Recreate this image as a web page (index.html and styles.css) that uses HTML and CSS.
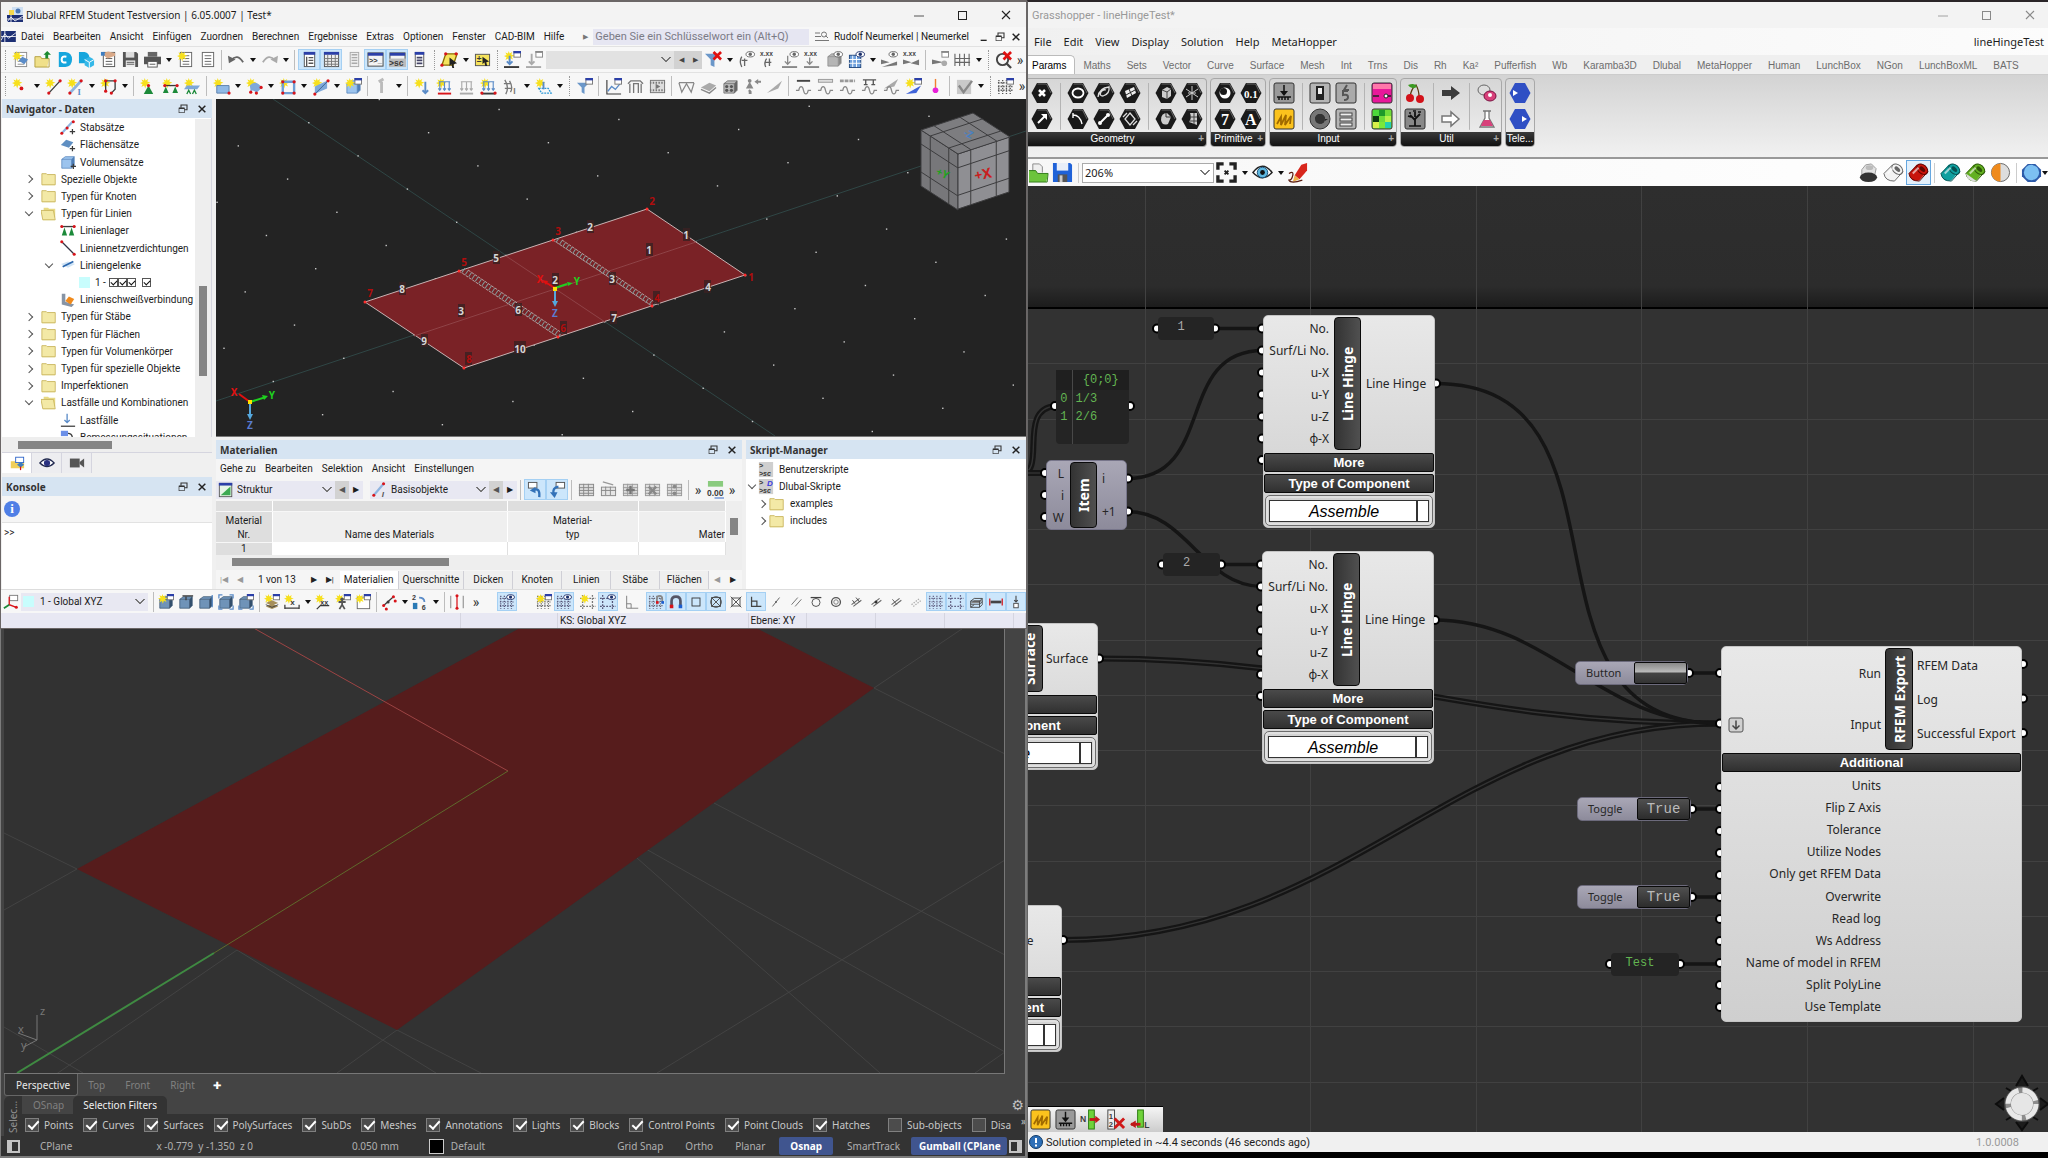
FILE: index.html
```html
<!DOCTYPE html>
<html lang="de">
<head>
<meta charset="utf-8">
<title>RFEM, Rhino und Grasshopper</title>
<link rel="stylesheet" href="styles.css">
</head>
<body>
<div class="desktop">
  <div class="left">
    <section class="rfem">
      <header class="titlebar">
        <svg class="applogo" viewBox="0 0 16 16"><rect x="5" width="11" height="8" fill="#cfe0f2"/><rect x="2" y="3" width="5" height="5" fill="#f5d94c"/><circle cx="11" cy="4" r="2.500" fill="#4a78b5"/><rect y="8" width="16" height="7" fill="#1d2f74"/><path d="M0 12h16M4 8v7M0 15l4-5 4 4 8-5" stroke="#fff" stroke-width=".8" fill="none"/></svg>
        <h1>Dlubal RFEM Student Testversion | 6.05.0007 | Test*</h1>
        <div class="winbtns"><button aria-label="Minimieren" data-icon="min"></button><button aria-label="Maximieren" data-icon="max"></button><button aria-label="Schließen" data-icon="close"></button></div>
      </header>
      <nav class="menubar">
        <svg class="doclogo" viewBox="0 0 16 12"><rect width="16" height="12" fill="#1d2f74"/><path d="M0 6h16M4 0v12M0 10l4-7 4 5 8-6" stroke="#fff" stroke-width=".9" fill="none"/></svg>
        <button>Datei</button><button>Bearbeiten</button><button>Ansicht</button><button>Einfügen</button><button>Zuordnen</button><button>Berechnen</button><button>Ergebnisse</button><button>Extras</button><button>Optionen</button><button>Fenster</button><button>CAD-BIM</button><button>Hilfe</button>
        <span class="play">▶</span>
        <input class="search" type="text" aria-label="Schlüsselwort" placeholder="Geben Sie ein Schlüsselwort ein (Alt+Q)">
        <svg class="find" viewBox="0 0 14 11"><path d="M0 2h5M0 5.500h6M0 9.500h14M13 7l-2.500-2.500" stroke="#777" fill="none"/><circle cx="9" cy="3.500" r="2.500" stroke="#777" fill="none"/></svg>
        <span class="user">Rudolf Neumerkel | Neumerkel</span>
        <div class="docbtns"><button aria-label="Minimieren" data-icon="dmin"></button><button aria-label="Wiederherstellen" data-icon="restore"></button><button aria-label="Schließen" data-icon="dclose"></button></div>
      </nav>
      <div class="tools" data-tools=": new open center cubes props save print v newdoc doc | undo v redo v | *panel *gridp report *console *script list : select v calc : loadnew loadgray =combo prev next filterx v eyeA xxA eyeB xxB boxeye gridblue v eyeC xxC | winramp rail v : zoomx more"></div>
      <div class="tools row2" data-tools=": node v line member v frame v | support hinge surfsup | surface v shell v opening v solid v block | gmember v | loadA loadB loadC loadD loadE v loadF v : filterw | chart arch film | curve slab dice persons ramp | waveA waveB waveC waveD waveE rampnew pin | check v : dotgrid more"></div>

      <div class="work">
        <aside class="sidebar">
          <section class="dock">
            <header class="dockhead"><h2>Navigator - Daten</h2><button aria-label="Lösen" data-icon="restore"></button><button aria-label="Schließen" data-icon="dclose"></button></header>
            <div class="treebox">
              <ul class="tree">
                <li class="l2"><i data-icon="stab"></i>Stabsätze</li>
                <li class="l2"><i data-icon="flaeche"></i>Flächensätze</li>
                <li class="l2"><i data-icon="volumen"></i>Volumensätze</li>
                <li class="l1 shut"><i data-icon="folder"></i>Spezielle Objekte</li>
                <li class="l1 shut"><i data-icon="folder"></i>Typen für Knoten</li>
                <li class="l1 expanded"><i data-icon="folderopen"></i>Typen für Linien</li>
                <li class="l2"><i data-icon="lager"></i>Linienlager</li>
                <li class="l2"><i data-icon="netz"></i>Liniennetzverdichtungen</li>
                <li class="l2 expanded"><i data-icon="gelenk"></i>Liniengelenke</li>
                <li class="l3"><span class="cyan"></span>1 - <input type="checkbox" checked aria-label="ux"><input type="checkbox" checked aria-label="uy"><input type="checkbox" checked aria-label="uz"><input class="apart" type="checkbox" checked aria-label="phi x"></li>
                <li class="l2"><i data-icon="weld"></i>Linienschweißverbindung</li>
                <li class="l1 shut"><i data-icon="folder"></i>Typen für Stäbe</li>
                <li class="l1 shut"><i data-icon="folder"></i>Typen für Flächen</li>
                <li class="l1 shut"><i data-icon="folder"></i>Typen für Volumenkörper</li>
                <li class="l1 shut"><i data-icon="folder"></i>Typen für spezielle Objekte</li>
                <li class="l1 shut"><i data-icon="folder"></i>Imperfektionen</li>
                <li class="l1 expanded"><i data-icon="folderopen"></i>Lastfälle und Kombinationen</li>
                <li class="l2"><i data-icon="lastfall"></i>Lastfälle</li>
                <li class="l2"><i data-icon="bemess"></i>Bemessungssituationen</li>
              </ul>
              <div class="vscroll"><span></span></div>
            </div>
            <div class="hscroll nav"><span></span></div>
            <div class="navtabs"><button class="on" aria-label="Daten" data-icon="tabdata"></button><button aria-label="Zeigen" data-icon="tabeye"></button><button aria-label="Ansichten" data-icon="tabcam"></button></div>
          </section>
          <section class="dock console">
            <header class="dockhead"><h2>Konsole</h2><button aria-label="Lösen" data-icon="restore"></button><button aria-label="Schließen" data-icon="dclose"></button></header>
            <div class="infobar"><span class="info">i</span></div>
            <div class="prompt">&gt;&gt;</div>
          </section>
        </aside>
        <div class="main">
          <div class="view3d">
            <svg class="scene">
              <g transform="translate(-216,-99)">
                <path d="M273 99L775 436M216 401L1026 131" stroke="#2f4645" fill="none"/>
                <g id="dots"></g>
                <path d="M745 275L647 209 365 302 464 368z" fill="#7a2226" stroke="#c9b4b4"/>
                <path d="M506 256L605 322M414 336L696 242" stroke="#8f4347" fill="none"/>
                <g fill="none"><path d="M557 240L655 306M463 270L561 336" stroke="#7f9c9c" stroke-width="5" stroke-dasharray="1 3"/><path d="M553 240L652 306M459 271L558 337M562 240L659 305M468 270L565 335" stroke="#b3a3a3" stroke-dasharray="3 1"/></g>
                <g class="nodes"><circle cx="745" cy="275" r="1.500"/><circle cx="647" cy="209" r="1.500"/><circle cx="553" cy="240" r="1.500"/><circle cx="652" cy="306" r="1.500"/><circle cx="459" cy="271" r="1.500"/><circle cx="558" cy="337" r="1.500"/><circle cx="365" cy="302" r="1.500"/><circle cx="464" cy="368" r="1.500"/></g>
                <g class="tagbg"><rect x="587" y="220" width="7" height="13"/><rect x="683" y="228" width="7" height="13"/><rect x="646" y="243" width="7" height="13"/><rect x="704" y="280" width="7" height="13"/><rect x="609" y="272" width="7" height="13"/><rect x="552" y="273" width="7" height="13"/><rect x="493" y="251" width="7" height="13"/><rect x="610" y="311" width="7" height="13"/><rect x="399" y="282" width="7" height="13"/><rect x="458" y="304" width="7" height="13"/><rect x="515" y="303" width="7" height="13"/><rect x="421" y="334" width="7" height="13"/><rect x="514" y="341" width="12" height="13"/><rect x="653" y="291" width="7" height="13"/><rect x="560" y="321" width="7" height="13"/><rect x="465" y="352" width="7" height="13"/></g>
                <g class="tags"><text x="590" y="231">2</text><text x="686" y="239">1</text><text x="649" y="254">1</text><text x="708" y="291">4</text><text x="612" y="283">3</text><text x="555" y="284">2</text><text x="496" y="262">5</text><text x="614" y="322">7</text><text x="402" y="293">8</text><text x="461" y="315">3</text><text x="518" y="314">6</text><text x="424" y="345">9</text><text x="520" y="353">10</text></g>
                <g class="tags red"><text x="751" y="281">1</text><text x="652" y="205">2</text><text x="558" y="235">3</text><text x="657" y="302">4</text><text x="464" y="266">5</text><text x="563" y="332">6</text><text x="370" y="297">7</text><text x="469" y="363">8</text></g>
                <path d="M555 288l-10-6" stroke="#e01010" stroke-width="2"/><path d="M542 280l6 1-2 4z" fill="#e01010"/>
                <path d="M555 288l12-4" stroke="#1fd01f" stroke-width="2"/><path d="M573 283l-6-1 1 4z" fill="#1fd01f"/>
                <path d="M555 288v14" stroke="#55a7dc" stroke-width="2"/><path d="M555 307l-3-6h6z" fill="#55a7dc"/>
                <rect x="553" y="287" width="4" height="4" fill="#ffe000"/>
                <g class="axes"><text x="540" y="283" fill="#e01010">X</text><text x="577" y="285" fill="#1fd01f">Y</text><text x="555" y="317" fill="#5a7bd0">Z</text><text x="234" y="396" fill="#e01010">X</text><text x="272" y="399" fill="#1fd01f">Y</text><text x="250" y="429" fill="#5a7bd0">Z</text></g>
                <path d="M250 402l-11-8" stroke="#e01010" stroke-width="2"/><path d="M250 402l16-5" stroke="#1fd01f" stroke-width="2"/><path d="M268 396l-6-1 2 5z" fill="#1fd01f"/><path d="M250 402v15" stroke="#55a7dc" stroke-width="2"/><path d="M250 420l-3-6h6z" fill="#55a7dc"/><rect x="248" y="400" width="4" height="4" fill="#ffe000"/>
                <g id="cube"></g>
                <g class="cubetext"><text x="984" y="179" fill="#c81e1e" font-size="14" transform="rotate(-12 984 179)">+X</text><text x="941" y="177" fill="#22a022" font-size="11" transform="rotate(25 941 177)">+Y</text><text x="967" y="137" fill="#4a80c0" font-size="10" transform="rotate(25 967 137)">-Z</text></g>
              </g>
            </svg>
          </div>
          <div class="docks">
            <section class="dock mat">
              <header class="dockhead"><h2>Materialien</h2><button aria-label="Lösen" data-icon="restore"></button><button aria-label="Schließen" data-icon="dclose"></button></header>
              <nav class="matmenu"><button>Gehe zu</button><button>Bearbeiten</button><button>Selektion</button><button>Ansicht</button><button>Einstellungen</button></nav>
              <div class="mattools">
                <label class="pick"><i data-icon="struct"></i><select aria-label="Gruppe"><option>Struktur</option></select></label><button class="arr off" aria-label="Zurück">◀</button><button class="arr" aria-label="Weiter">▶</button>
                <span class="sep"></span>
                <label class="pick"><i data-icon="basis"></i><select aria-label="Objekte"><option>Basisobjekte</option></select></label><button class="arr off" aria-label="Zurück">◀</button><button class="arr" aria-label="Weiter">▶</button>
                <div class="tools flat" data-tools="| *arrL *arrR | tbl tbl2 tblp tblx tbls | more zero more"></div>
              </div>
              <div class="tablebox">
                <table>
                  <colgroup><col class="c1"><col class="c2"><col class="c3"><col></colgroup>
                  <thead><tr class="strip"><th></th><th></th><th></th><th></th></tr><tr><th>Material<br>Nr.</th><th>Name des Materials</th><th>Material-<br>typ</th><th class="cut">Mater</th></tr></thead>
                  <tbody><tr><th>1</th><td></td><td></td><td></td></tr></tbody>
                </table>
                <div class="vscroll small"><span></span></div>
              </div>
              <div class="hscroll"><span></span></div>
              <div class="mattabs">
                <button class="step dim" aria-label="Erste">|◀</button><button class="step dim" aria-label="Vorige">◀</button><span>1 von 13</span><button class="step" aria-label="Nächste">▶</button><button class="step" aria-label="Letzte">▶|</button>
                <button class="tab on">Materialien</button><button class="tab">Querschnitte</button><button class="tab">Dicken</button><button class="tab">Knoten</button><button class="tab">Linien</button><button class="tab">Stäbe</button><button class="tab">Flächen</button>
                <button class="step dim" aria-label="Links">◀</button><button class="step" aria-label="Rechts">▶</button>
              </div>
            </section>
            <section class="dock skript">
              <header class="dockhead"><h2>Skript-Manager</h2><button aria-label="Lösen" data-icon="restore"></button><button aria-label="Schließen" data-icon="dclose"></button></header>
              <ul class="tree scripts">
                <li class="s1"><i data-icon="scr"></i>Benutzerskripte</li>
                <li class="s1 expanded"><i data-icon="scrd"></i>Dlubal-Skripte</li>
                <li class="s2 shut"><i data-icon="folder"></i>examples</li>
                <li class="s2 shut"><i data-icon="folder"></i>includes</li>
              </ul>
            </section>
          </div>
        </div>
      </div>
      <div class="bottomtools">
        <i data-icon="ucs"></i>
        <label class="pick global"><span class="cyan"></span><select aria-label="Koordinatensystem"><option>1 - Global XYZ</option></select></label>
        <div class="tools flat tight" data-tools="| wa wb wc wd we | mdA dim v dimx man home | bend v num v | bars more _ _ _ *gdots"></div>
        <div class="tools flat tight end" data-tools="gnew *gdots2 _ gframe *gframe2 _ corner _ *magA *magB *sqr *sqx sqx2 *perp seg par tan circ hA hB hC hD *gridA *gridB *stack *redbar *weight"></div>
      </div>
      <footer class="status"><span></span><span></span><span>KS: Global XYZ</span><span>Ebene: XY</span><span></span><span></span><span></span><span></span></footer>
    </section>

    <section class="rhino">
      <div class="rview">
        <svg class="scene">
          <g transform="translate(-4,-629)" fill="none">
            <path d="M4 1027L83 1073M397 1030L337 1073M397 1030L481 1073M77 869L4 910M77 869L4 833M874 688L1005 754M874 688L1005 600M508 771L1005 1052M637 858L880 1073M714 803L1005 955M1005 860L657 1073M1005 1052L975 1073M237 950L4 1110M237 950L436 1073" stroke="#434343"/>
            <path d="M77 869L397 1030 874 688 756 628H520z" fill="#561c1c"/>
            <path d="M250 626L508 771" stroke="#9c4444"/>
            <path d="M17 1073L214 953" stroke="#3f8a42" stroke-width="2"/><path d="M214 953L508 771" stroke="#5f6a2c"/>
            <path d="M37 1040V1015M37 1040l-19-7M37 1040l-13 7" stroke="#777"/>
            <g class="ax"><text x="40" y="1015">z</text><text x="18" y="1033">x</text><text x="21" y="1049">y</text></g>
          </g>
        </svg>
      </div>
      <div class="rtabs"><button class="on">Perspective</button><button>Top</button><button>Front</button><button>Right</button><button class="plus" aria-label="Neu">✚</button></div>
      <div class="rpanel">
        <span class="selec">Selec...</span>
        <div class="rcol">
          <div class="rsub"><button>OSnap</button><button class="on">Selection Filters</button><button class="gear" aria-label="Optionen">⚙</button></div>
          <div class="filters">
            <label><input type="checkbox" checked>Points</label><label><input type="checkbox" checked>Curves</label><label><input type="checkbox" checked>Surfaces</label><label><input type="checkbox" checked>PolySurfaces</label><label><input type="checkbox" checked>SubDs</label><label><input type="checkbox" checked>Meshes</label><label><input type="checkbox" checked>Annotations</label><label><input type="checkbox" checked>Lights</label><label><input type="checkbox" checked>Blocks</label><label><input type="checkbox" checked>Control Points</label><label><input type="checkbox" checked>Point Clouds</label><label><input type="checkbox" checked>Hatches</label><label class="apart"><input type="checkbox">Sub-objects</label><label><input type="checkbox">Disa</label><span class="chev">»</span>
          </div>
        </div>
      </div>
      <footer class="rstatus">
        <button class="pane" aria-label="Leiste"></button><button class="cpl">CPlane</button><span class="xyz">x -0.779&nbsp; y -1.350&nbsp; z 0</span><span class="unit">0.050 mm</span><span class="layer"><i></i>Default</span>
        <button>Grid Snap</button><button>Ortho</button><button>Planar</button><button class="on">Osnap</button><button>SmartTrack</button><button class="on last">Gumball (CPlane</button><button class="pane right" aria-label="Leiste"></button>
      </footer>
    </section>
  </div>

  <section class="gh">
    <header class="ghtitle"><h1>Grasshopper - lineHingeTest*</h1><div class="winbtns"><button aria-label="Minimize" data-icon="min"></button><button aria-label="Maximize" data-icon="max"></button><button aria-label="Close" data-icon="close"></button></div></header>
    <nav class="ghmenu"><button>File</button><button>Edit</button><button>View</button><button>Display</button><button>Solution</button><button>Help</button><button>MetaHopper</button><span>lineHingeTest</span></nav>
    <nav class="ghtabs"><button class="on">Params</button><button>Maths</button><button>Sets</button><button>Vector</button><button>Curve</button><button>Surface</button><button>Mesh</button><button>Int</button><button>Trns</button><button>Dis</button><button>Rh</button><button>Ka²</button><button>Pufferfish</button><button>Wb</button><button>Karamba3D</button><button>Dlubal</button><button>MetaHopper</button><button>Human</button><button>LunchBox</button><button>NGon</button><button>LunchBoxML</button><button>BATS</button></nav>
    <div class="ribbon">
      <div class="grp first"><div class="icons" data-ribbon="hX hArrow | hCircle hArc hSpiral hLine hPlane hMesh | hBox hBrep hField hTwist"></div><p>Geometry<b>+</b></p></div>
      <div class="grp"><div class="icons" data-ribbon="hBool hNum hInt hText"></div><p>Primitive<b>+</b></p></div>
      <div class="grp"><div class="icons" data-ribbon="bButton bPanel | bSlider bKnob bSketch bList | bGrad bImg"></div><p>Input<b>+</b></p></div>
      <div class="grp"><div class="icons" data-ribbon="uCherry uTree | uArrow uArrowL | uPill uFlask"></div><p>Util<b>+</b></p></div>
      <div class="grp"><div class="icons" data-ribbon="tA tB"></div><p class="tele">Tele...</p></div>
    </div>
    <div class="ghtools">
      <button aria-label="Open" data-icon="gOpen" class="slim"></button><button aria-label="Save" data-icon="gSave"></button><span class="sep"></span>
      <select class="zoom" aria-label="Zoom"><option>206%</option></select>
      <button aria-label="Fit" data-icon="gFit"></button><span class="caret"></span><button aria-label="Preview" data-icon="gEye"></button><span class="caret"></span><button aria-label="Sketch" data-icon="gPencil"></button>
      <span class="grow"></span>
      <button aria-label="No preview" data-icon="cylDark"></button><button aria-label="Wireframe" data-icon="cylWire"></button><button class="on" aria-label="Shaded" data-icon="cylRed"></button><span class="sep"></span><button aria-label="Selected" data-icon="cylTeal"></button><button aria-label="Document" data-icon="cylGreen"></button><button aria-label="Settings" data-icon="ballO"></button><span class="sep"></span><button class="slim" aria-label="Quality" data-icon="ballB"></button><span class="caret last"></span>
    </div>
    <div class="graph">
      <div class="sheet">
        <svg class="wires" id="wires"></svg>

        <div class="node panel" style="left:1158px;top:317px;width:56px;height:23px">1</div>
        <div class="node panel" style="left:1163px;top:553px;width:57px;height:23px">2</div>
        <div class="node panel green" style="left:1611px;top:953px;width:68px;height:23px">Test</div>
        <table class="node list" style="left:1056px;top:370px;width:73px;height:73px"><thead><tr><th></th><th>{0;0}</th></tr></thead><tbody><tr><td>0</td><td>1/3</td></tr><tr><td>1</td><td>2/6</td></tr><tr><td></td><td></td></tr></tbody></table>

        <div class="node item" style="left:1046px;top:460px;width:81px;height:70px"><div class="ins"><span>L</span><span>i</span><span>W</span></div><div class="cap">Item</div><div class="outs"><span>i</span><span>+1</span></div></div>

        <div class="node comp" style="left:1263px;top:315px;width:172px"><div class="body"><div class="ins"><span>No.</span><span>Surf/Li No.</span><span>u-X</span><span>u-Y</span><span>u-Z</span><span>φ-X</span></div><div class="cap">Line Hinge</div><div class="outs"><span>Line Hinge</span></div></div><div class="bar">More</div><div class="bar">Type of Component</div><div class="drop"><select aria-label="Type of Component"><option>Assemble</option></select></div></div>
        <div class="node comp" style="left:1262px;top:551px;width:172px"><div class="body"><div class="ins"><span>No.</span><span>Surf/Li No.</span><span>u-X</span><span>u-Y</span><span>u-Z</span><span>φ-X</span></div><div class="cap">Line Hinge</div><div class="outs"><span>Line Hinge</span></div></div><div class="bar">More</div><div class="bar">Type of Component</div><div class="drop"><select aria-label="Type of Component"><option>Assemble</option></select></div></div>
        <div class="node comp short" style="left:902px;top:623px;width:196px"><div class="body"><div class="ins"></div><div class="cap">Surface</div><div class="outs"><span>Surface</span></div></div><div class="bar">More</div><div class="bar">Type of Component</div><div class="drop"><select aria-label="Type of Component"><option>Assemble</option></select></div></div>
        <div class="node comp short" style="left:905px;top:905px;width:157px"><div class="body"><div class="ins"></div><div class="cap">Line</div><div class="outs"><span>Line</span></div></div><div class="bar">More</div><div class="bar">Type of Component</div><div class="drop"><select aria-label="Type of Component"><option>Assemble</option></select></div></div>

        <div class="node widget" style="left:1575px;top:661px;width:113px;height:24px"><span>Button</span><button class="push" aria-label="Button"></button></div>
        <div class="node widget" style="left:1577px;top:797px;width:114px;height:24px"><span>Toggle</span><button>True</button></div>
        <div class="node widget" style="left:1577px;top:885px;width:114px;height:24px"><span>Toggle</span><button>True</button></div>

        <div class="node export" style="left:1721px;top:646px;width:301px">
          <div class="body"><div class="ins"><span>Run</span><span><svg class="flat" viewBox="0 0 16 16"><rect x="1" y="1" width="14" height="14" rx="2" fill="#d0d0d0" stroke="#555"/><path d="M8 3.500v8M4.500 8.500L8 12l3.500-3.500" stroke="#444" stroke-width="1.500" fill="none"/></svg>Input</span></div><div class="cap">RFEM Export</div><div class="outs"><span>RFEM Data</span><span>Log</span><span>Successful Export</span></div></div>
          <div class="bar">Additional</div>
          <div class="extra"><span>Units</span><span>Flip Z Axis</span><span>Tolerance</span><span>Utilize Nodes</span><span>Only get RFEM Data</span><span>Overwrite</span><span>Read log</span><span>Ws Address</span><span>Name of model in RFEM</span><span>Split PolyLine</span><span>Use Template</span></div>
        </div>
        <svg class="compass" style="left:1992px;top:1074px" viewBox="0 0 60 60"><path d="M24 12l6-10 6 10M48 24l8 6-8 6M24 48l6 8 6-8M12 24l-8 6 8 6M14 14l5 3M46 14l-5 3M14 46l5-3M46 46l-5-3" fill="#1c1c1c" stroke="#0d0d0d" stroke-width="2"/><circle cx="30" cy="30" r="17" fill="#8c8c8c" stroke="#555"/><circle cx="30" cy="30" r="14" fill="none" stroke="#e8e8e8" stroke-width="5" stroke-dasharray="18 4"/><circle cx="30" cy="30" r="11" fill="#e6e6e6"/></svg>
      </div>
      <div class="mru"><button aria-label="Panel" data-icon="bPanel"></button><button aria-label="Button" data-icon="bButton"></button><button aria-label="Nodes" data-icon="nPlus"></button><button aria-label="Delete" data-icon="nDel"></button><button aria-label="Lines" data-icon="nL"></button></div>
    </div>
    <footer class="ghstatus"><svg viewBox="0 0 14 14"><circle cx="7" cy="7" r="6.500" fill="#2d6fb8" stroke="#103a66"/><path d="M7 3v5M7 9.500v2" stroke="#fff" stroke-width="2"/></svg><span>Solution completed in ~4.4 seconds (46 seconds ago)</span><em>1.0.0008</em></footer>
  </section>
</div>
<script src="app.js"></script>
</body>
</html>
```
FILE: styles.css
```css
* { box-sizing: border-box; }
body { margin: 0; background: #000; font-family: Roboto, "Noto Sans", sans-serif; font-size: 10px; color: #1c1c1c; overflow: hidden; }
button, input, select { font: inherit; color: inherit; margin: 0; padding: 0; border: 0; background: none; appearance: none; border-radius: 0; white-space: nowrap; }
h1, h2, p { margin: 0; font-size: inherit; font-weight: 400; }
ul { list-style: none; margin: 0; padding: 0; }
svg { display: block; }
.desktop { display: grid; grid-template-columns: 1027fr 1021fr; height: 100vh; min-height: 900px; }
.left { display: flex; flex-direction: column; min-width: 0; position: relative; }

/* RFEM window */
.rfem { border: 1px solid #6b6666; border-top-width: 2px; background: #f7f7f7; }
.titlebar { display: flex; align-items: center; height: 25px; background: #f3f3f3; padding: 0 6px; gap: 3px; }
.titlebar h1 { font-family: "Noto Sans", sans-serif; font-size: 10px; flex: 1; white-space: nowrap; }
.applogo { width: 16px; height: 16px; }
.winbtns { display: flex; gap: 22px; padding-right: 3px; }
.winbtns button { width: 22px; height: 20px; }
.winbtns svg { width: 18px; height: 18px; margin: auto; }
.menubar { display: flex; align-items: center; height: 19px; gap: 9px; }
.menubar .doclogo { width: 15px; height: 11px; margin-right: -4px; }
.play { font-size: 7px; color: #777; margin-left: 10px; }
.search { background: #e6e6f2; height: 16px; flex: 1; min-width: 90px; margin-left: -4px; padding-left: 2px; font-size: 11px; }
.search::placeholder { color: #7b7b86; opacity: 1; }
.find { width: 14px; height: 11px; margin: 0 -4px 0 -3px; }
.docbtns { display: flex; }
.docbtns button { width: 16px; }
.docbtns svg, .dockhead svg { width: 12px; height: 12px; }
.tools { display: flex; align-items: center; height: 26px; border-top: 1px solid #e2e2e2; }
.tools button { width: 22px; height: 21px; flex: none; display: flex; align-items: center; justify-content: center; }
.tools button svg { width: 17px; height: 17px; overflow: visible; }
.tools button.on { background: #cce6fb; border: 1px solid #a5d0f3; }
.tools .more { width: 12px; font-size: 14px; line-height: 10px; color: #333; }
.caret { width: 11px; height: 20px; flex: none; display: flex; align-items: center; justify-content: center; }
.caret::before { content: ""; border: 3px solid transparent; border-top: 4px solid #111; border-bottom: 0; }
.bar-sep { width: 7px; flex: none; display: flex; justify-content: center; }
.bar-sep::before { content: ""; height: 20px; border-left: 1px solid #bdbdbd; }
.bar-sep.dots { width: 8px; }
.bar-sep.dots::before { border-left: 1px dotted #999; }
.space { width: 4px; flex: none; }
.combo { flex: 1 1 120px; height: 18px; background-color: #e2e2e2; margin-left: 1px; }
.tools .stepbtn { width: 14px; height: 18px; background: #d2d2d2; font-size: 7px; color: #444; }
.row2 { height: 27px; }
.tools.flat { border: 0; height: 22px; }

.work { display: grid; grid-template-columns: 214px minmax(0, 1fr); height: 490px; background: #f0f0f0; padding-left: 1px; }
.sidebar { display: flex; flex-direction: column; gap: 4px; padding-right: 4px; }
.dock { min-width: 0; display: flex; flex-direction: column; }
.dockhead { display: flex; align-items: center; height: 19px; background: #d6e4f2; padding: 0 2px 0 4px; gap: 3px; flex: none; }
.dockhead h2 { flex: 1; font-family: "Noto Sans", sans-serif; font-weight: 700; color: #333; }
.dockhead button { width: 16px; }
.dockhead svg { margin: auto; }
.treebox { display: flex; height: 319px; overflow: hidden; background: #fff; border-right: 1px solid #d5d5df; padding-top: 1px; }
.tree { flex: 1; min-width: 0; height: 327px; display: grid; grid-auto-rows: 1fr; overflow: hidden; }
.tree li { display: flex; align-items: center; gap: 4px; white-space: nowrap; position: relative; }
.tree i svg { width: 16px; height: 16px; }
.tree .l1 { padding-left: 39px; } .tree .l2 { padding-left: 58px; } .tree .l3 { padding-left: 77px; gap: 0; }
.tree .l3 .cyan { margin-right: 5px; }
.tree .l3 input { width: 9px; height: 9px; border: 1px solid #555; background: #fff; }
.tree .l3 input:first-of-type { margin-left: 3px; }
.tree .l3 .apart { margin-left: 6px; }
.tree input:checked::before { content: ""; display: block; width: 5px; height: 3px; border: 1px solid #111; border-width: 0 0 1px 1px; rotate: -45deg; margin: 1px; }
.cyan { width: 11px; height: 11px; background: #c8fdfd; }
.shut::before, .expanded::before { content: ""; width: 5px; height: 5px; border: solid #555; border-width: 1px 1px 0 0; rotate: 45deg; position: absolute; left: 24px; }
.expanded::before { rotate: 135deg; margin-top: -3px; }
.l2.expanded::before { left: 44px; }
.vscroll { width: 16px; background: #eee; padding: 167px 4px 0; flex: none; }
.vscroll span { display: block; height: 90px; background: #858585; }
.hscroll { background: #eee; height: 16px; padding: 4px 16px; flex: none; }
.hscroll span { display: block; width: 45%; height: 8px; background: #858585; }
.hscroll.nav { border-bottom: 1px solid #d5d5df; }
.hscroll.nav span { width: 53%; }
.navtabs { display: flex; height: 20px; }
.navtabs button { width: 30px; border-right: 1px solid #d5d5df; display: flex; align-items: center; justify-content: center; background: #ededf0; }
.navtabs .on { background: #fff; }
.navtabs svg { width: 16px; height: 16px; }
.console { flex: 1; background: #fff; }
.infobar { height: 27px; background: #f5f5f5; border-bottom: 1px solid #e2e2e2; padding: 5px 2px; }
.info { display: block; width: 16px; height: 16px; border-radius: 50%; background: #4f7fe6; color: #fff; font: 700 13px/16px "Liberation Serif", serif; text-align: center; }
.prompt { padding: 4px 2px; }
.main { display: flex; flex-direction: column; min-width: 0; }
.view3d { background: #232323; flex: 1; min-height: 0; overflow: hidden; border-bottom: 1px solid #777; }
.scene { width: 100%; height: 100%; }
.nodes circle { fill: #ff3030; }
.tagbg rect { fill: #3a2022; opacity: .8; }
.tags text { font: 700 10px "Noto Sans", sans-serif; fill: #d6d6d6; text-anchor: middle; }
.tags.red text { fill: #b00d0d; }
.axes text { font: 700 10px "Noto Sans", sans-serif; text-anchor: middle; }
.cubetext text { font-family: "Noto Sans", sans-serif; font-weight: 700; text-anchor: middle; }
.docks { display: grid; grid-template-columns: minmax(0, 1fr) 280px; gap: 4px; height: 152px; padding-top: 3px; flex: none; }
.mat { background: #f5f5f5; }
.matmenu { display: flex; gap: 9px; height: 19px; align-items: center; padding-left: 4px; }
.mattools { display: flex; align-items: center; height: 23px; }
.mattools .tools { flex: 1; min-width: 0; }
.mattools .sep { width: 7px; flex: none; }
.pick { display: flex; align-items: center; gap: 3px; height: 18px; background: #e8e8f2; padding: 0 2px; width: 119px; flex: none; }
.pick svg { width: 16px; height: 16px; }
.pick select { flex: 1; min-width: 0; height: 18px; }
.pick, .combo, .zoom { background-image: linear-gradient(45deg, transparent 4px, #777 4px 5px, transparent 5px), linear-gradient(-45deg, transparent 4px, #777 4px 5px, transparent 5px); background-size: 5px 6px; background-repeat: no-repeat; background-position: right 8px center, right 3px center; }
.arr { width: 14px; height: 18px; font-size: 8px; background: #e8e8f2; flex: none; }
.arr.off { background: #d2d2d2; color: #555; }
.tablebox { display: flex; height: 54px; overflow: hidden; }
table { border-collapse: collapse; table-layout: fixed; }
.tablebox table { flex: 1; min-width: 0; background: #efefef; }
.tablebox th { font-weight: 400; padding: 0; border-right: 1px solid #fff; vertical-align: bottom; line-height: 14px; height: 31px; overflow: hidden; }
.tablebox td { background: #fff; border-right: 1px solid #e0e0e0; }
.tablebox tr > th:first-child { background: #dedede; }
.tablebox .strip th { height: 10px; background: #dedede; border-bottom: 1px solid #f7f7f7; }
.tablebox tbody th { height: 12px; line-height: 12px; border-top: 1px solid #f7f7f7; }
.tablebox .cut { text-align: right; }
.c1 { width: 56px; } .c2 { width: 235px; } .c3 { width: 131px; }
.vscroll.small { padding-top: 17px; } .vscroll.small span { height: 17px; }
.mat .hscroll { height: 15px; padding-top: 3px; }
.mat .hscroll span { width: 44%; }
.mattabs { display: flex; align-items: center; height: 19px; }
.mattabs span { margin: 0 10px; }
.step { width: 16px; font-size: 8px; color: #222; }
.step.dim { color: #999; }
.tab { height: 18px; padding: 0 4px; background: #efefef; border-right: 1px solid #cfcfd6; min-width: 49px; }
.tab.on { background: #fff; margin-left: 2px; }
.skript { background: #fff; }
.scripts { flex: none; height: 70px; padding-top: 2px; }
.scripts .s1 { padding-left: 12px; gap: 5px; } .scripts .s2 { padding-left: 23px; gap: 5px; }
.scripts .expanded::before { left: 3px; } .scripts .shut::before { left: 13px; }
.bottomtools { display: flex; align-items: center; height: 24px; padding-left: 2px; gap: 2px; background: #f7f7f7; border-top: 1px solid #ddd; }
.bottomtools > i svg { width: 16px; height: 16px; }
.pick.global { width: 127px; gap: 6px; }
.tight button { width: 20px; height: 19px; }
.tools.tight button { width: 20px; height: 19px; }
.tools.tight .more { width: 18px; }
.tools.tight button svg { width: 16px; height: 16px; }
.tight .bar-sep { width: 6px; } .tight .caret { width: 11px; }
.tight.end { margin-left: auto; }
.status { display: grid; grid-template-columns: 461fr 97fr 191fr 59fr 69fr 69fr 69fr 12fr; height: 15px; background: #e8e8f3; line-height: 15px; }
.status span { border-right: 1px solid #d5d5e0; padding-left: 2px; }

/* Rhino window */
.rhino { flex: 1; min-height: 0; display: flex; flex-direction: column; background: #444; border: 1px solid #7c7c7c; border-width: 0 2px 2px 1px; color: #c8c8c8; font-family: "Noto Sans", sans-serif; }
.rview { flex: 1; min-height: 0; margin: 0 20px 0 3px; background: #323232; border: solid #777; border-width: 0 1px 1px 0; overflow: hidden; }
.ax text { font: 11px "Noto Sans", sans-serif; fill: #777; }
.rtabs { display: flex; height: 22px; padding-left: 3px; }
.rtabs button { color: #808080; padding: 0 10px; }
.rtabs .on { background: #333; color: #e8e8e8; border: 1px solid #666; border-top: 0; border-radius: 0 0 3px 3px; padding: 0 7px 0 11px; }
.rtabs .plus { color: #fff; font-size: 10px; padding: 0 8px; }
.rpanel { display: flex; height: 40px; padding-left: 3px; }
.selec { writing-mode: vertical-rl; rotate: 180deg; width: 18px; background: #333; color: #909090; border-radius: 0 0 6px 0; line-height: 18px; padding-top: 3px; }
.rcol { flex: 1; min-width: 0; }
.rsub { display: flex; height: 18px; }
.rsub button { color: #808080; padding: 0 9px 0 11px; }
.rsub .on { background: #333; color: #f0f0f0; border-radius: 5px 5px 0 0; padding: 0 10px; }
.rsub .gear { margin-left: auto; padding: 0 1px; font: 14px "DejaVu Sans", sans-serif; color: #c0c0c0; }
.filters { display: flex; align-items: center; height: 22px; background: #333; padding-left: 3px; overflow: hidden; gap: 10px; }
.filters label { display: flex; align-items: center; gap: 5px; white-space: nowrap; }
.filters .apart { margin-left: 8px; }
.filters input { width: 14px; height: 14px; border: 1px solid #808080; background: #4c4c4c; }
.filters input:checked::before { content: ""; display: block; width: 9px; height: 4px; border: solid #fff; border-width: 0 0 2px 2px; rotate: -48deg; margin: 2px 0 0 2px; }
.chev { margin-left: auto; align-self: start; }
.rstatus { display: flex; align-items: center; height: 20px; background: #333; padding-left: 6px; color: #b0b0b0; }
.pane { width: 13px; height: 13px; border: 2px solid #c4c4c4; border-left-width: 5px; background: #333; flex: none; }
.pane.right { border-width: 2px 5px 2px 2px; margin: 0 3px 0 2px; }
.cpl { margin-left: 20px; } .xyz { margin-left: 84px; } .unit { margin-left: 99px; }
.layer { display: flex; align-items: center; gap: 7px; margin: 0 auto 0 30px; }
.layer i { width: 15px; height: 15px; background: #000; border: 1px solid #ccc; }
.rstatus button:not(.pane) { padding: 0 11px; }
.rstatus .cpl:not(.pane) { padding: 0; }
.rstatus .on { background: #40558f; color: #fff; font-weight: 700; height: 18px; border-radius: 2px; margin-left: 3px; margin-right: 3px; }
.rstatus .last:not(.pane) { padding: 0 0 0 8px; width: 96px; overflow: hidden; margin: 0; text-align: left; }

/* Grasshopper window */
.gh { display: flex; flex-direction: column; min-width: 0; overflow: hidden; border-left: 1px solid #666; border-top: 2px solid #2a2528; background: #f3f3f3; padding-bottom: 6px; background-clip: content-box; }
.ghtitle { display: flex; align-items: center; height: 26px; padding: 0 4px; color: #999; font-size: 11px; background: #f3f3f3; }
.ghtitle h1 { flex: 1; }
.ghtitle .winbtns svg { opacity: .5; }
.ghmenu { display: flex; align-items: center; height: 27px; padding: 0 4px 0 6px; gap: 12px; font-family: "Noto Sans", sans-serif; font-size: 11px; background: linear-gradient(90deg, #f0f0f0, #fcfcfc); }
.ghmenu span { margin-left: auto; }
.ghtabs { display: flex; height: 20px; background: #efefef; border-bottom: 1px solid #ccc; font-family: "Liberation Sans", sans-serif; color: #6d6d6d; gap: 16px; flex: none; }
.ghtabs button { padding-top: 2px; }
.ghtabs .on { background: #fff; color: #000; padding: 0 8px 0 4px; border: 1px solid #bbb; border-bottom: 0; border-left: 0; border-radius: 0 5px 0 0; margin-right: -8px; }
.ribbon { display: flex; gap: 3px; height: 84px; padding: 3px 0; background: linear-gradient(#d3d3d3, #f1f1f1); border-bottom: 2px solid #999; flex: none; }
.grp { height: 69px; display: flex; flex-direction: column; border: 1px solid #a8a8a8; border-radius: 4px; background: linear-gradient(#d6d6d6, #f0f0f0); overflow: hidden; }
.grp.first { border-left: 0; border-radius: 0 4px 4px 0; }
.icons { flex: 1; display: grid; grid-template-rows: 26px 26px; grid-auto-flow: column; justify-content: center; padding: 1px 1px 0; }
.icons button { width: 26px; height: 26px; display: grid; place-items: center; }
.icons svg { width: 22px; height: 22px; }
.icons .vsep { grid-row: span 2; width: 10px; background: linear-gradient(#b4b4b4, #b4b4b4) no-repeat center / 1px 90%; }
.grp p { height: 14px; background: linear-gradient(#3a3a3a, #111); color: #fff; font: 10px/13px "Liberation Sans", sans-serif; text-align: center; padding: 0 12px 0 3px; position: relative; }
.grp .tele { padding: 0; }
.grp b { position: absolute; right: 2px; color: #aaa; }
.ghtools { display: flex; align-items: center; height: 27px; background: linear-gradient(90deg, #f7f7f7, #fff); flex: none; }
.ghtools button { width: 25px; height: 25px; display: grid; place-items: center; flex: none; }
.ghtools button svg { width: 21px; height: 21px; }
.ghtools button.slim { width: 22px; }
.ghtools button.on { background: #e3f0fb; border: 1px solid #66a7e0; }
.ghtools .sep { width: 1px; height: 20px; background: #ccc; margin: 0 3px; }
.ghtools .caret.last { width: 6px; }
.grow { flex: 1; }
.zoom { width: 132px; height: 20px; border: 1px solid #aaa; background-color: #fff; padding-left: 2px; font-family: "Noto Sans", sans-serif; font-size: 11px; }
.graph { flex: 1; min-height: 0; position: relative; overflow: hidden; background: linear-gradient(#2e2e2e, #2c2c2c 100px, #1c1c1c 121px, #000 121px, #000 123px, #323232 123px); }
.sheet { position: absolute; left: -1028px; top: -186px; width: 2400px; height: 1500px; }
.wires { width: 100%; height: 100%; }
.node { position: absolute; font-family: "Noto Sans", sans-serif; font-size: 12px; color: #262626; }
.panel { background: #242424; border-radius: 4px; color: #aaa; font: 12px/20px "Liberation Mono", monospace; text-align: center; padding-right: 10px; }
.panel.green, .list { color: #63b552; }
.list { background: #242424; border-radius: 4px; font: 12px/16px "Liberation Mono", monospace; }
.list th { font-weight: 400; background: #1f1f1f; height: 20px; padding: 0; }
.list td { padding: 0 0 0 3px; height: 18px; }
.list tr > :first-child { width: 16px; border-right: 1px solid #484848; padding: 0; text-align: center; }
.item { display: grid; grid-template-columns: 23px 27px 1fr; background: linear-gradient(#a9a7b6, #8d8b9b); border-radius: 5px; border: 1px solid #77758a; padding: 1px 0; }
.item .ins { padding-right: 6px; } .item .outs { padding-left: 5px; line-height: 33px; }
.ins, .outs, .extra { display: flex; flex-direction: column; white-space: nowrap; }
.ins span, .extra span { flex: 1; display: flex; align-items: center; justify-content: flex-end; }
.outs span { flex: 1; display: flex; align-items: center; }
.cap { writing-mode: vertical-rl; rotate: 180deg; display: flex; align-items: center; justify-content: center; background: linear-gradient(-90deg, #333, #505050); border: 1px solid #0a0a0a; border-radius: 4px; color: #fff; font-weight: 700; font-size: 14px; }
.comp, .export { background: linear-gradient(#e8e8e8, #cfcfcf); border: 1px solid #c4c4c4; border-radius: 5px; }
.comp .body { display: grid; grid-template-columns: 1fr 27px 73px; height: 137px; padding: 1px 0 3px; }
.comp .ins { padding-right: 5px; padding-bottom: 1px; } .comp .outs { padding-left: 5px; }
.comp.short .body { height: 71px; grid-template-columns: 1fr 27px 54px; }
.short .outs { padding-left: 3px; }
.bar { height: 19px; margin: 0 0 2px; background: linear-gradient(#4a4a4a, #303030); border: 1px solid #0a0a0a; border-radius: 2px; color: #fff; font: 700 13px/17px "Liberation Sans", sans-serif; text-align: center; white-space: nowrap; }
.drop { height: 31px; margin: 2px 1px 1px; border: 1px solid #6c6c6c; border-radius: 5px; padding: 4px 3px 3px; box-shadow: inset 0 0 0 2px #e0e0e0; }
.drop select { width: 100%; height: 22px; background: linear-gradient(#333, #333) no-repeat right 10px top / 2px 100%, #fff; border: 1px solid #333; font: italic 16px "Liberation Sans", sans-serif; text-align: center; text-align-last: center; color: #000; padding-right: 10px; }
.widget { display: flex; align-items: stretch; background: linear-gradient(#a9a7b6, #8d8b9b); border: 1px solid #6c6a7c; border-radius: 5px; font-size: 11px; }
.widget span { flex: 1; display: flex; align-items: center; padding: 0 0 1px 10px; }
.widget button { width: 53px; background: linear-gradient(#505050, #2c2c2c); border: 1px solid #0a0a0a; border-radius: 2px; color: #bbb; font: 14px/18px "Liberation Mono", monospace; }
.widget .push { background: linear-gradient(#888, #bbb 45%, #444 50%, #333); }
.export .body { display: grid; grid-template-columns: 163px 28px 1fr; height: 106px; padding: 1px 0 3px; }
.export .ins { padding-right: 4px; }
.export .ins span { position: relative; }
.export .flat { position: absolute; left: 6px; width: 16px; height: 16px; }
.export .outs { padding-left: 4px; }
.extra { width: 158px; padding: 0 0 3px; height: 247px; margin-left: 1px; }
.compass { position: absolute; width: 60px; height: 60px; }
.mru { position: absolute; left: 0; bottom: 0; display: flex; height: 26px; width: 135px; background: linear-gradient(#f5f5f5, #ccc); border-top: 1px solid #000; }
.mru button { width: 25px; display: grid; place-items: center; }
.mru svg { width: 21px; height: 21px; }
.ghstatus { display: flex; align-items: center; height: 20px; gap: 3px; padding: 0 29px 0 1px; background: #f0f0f0; font-size: 11px; flex: none; }
.ghstatus svg { width: 14px; height: 14px; }
.ghstatus em { margin-left: auto; font-style: normal; color: #999; }
```
FILE: app.js
```js
const RED = '#d8141a', BLUE = '#5b8cc8', GRAY = '#8c8c8c', INK = '#3a3a3a';
const p = (d, c = INK, w = 1.4, f = 'none') => `<path d="${d}" stroke="${c}" stroke-width="${w}" fill="${f}"/>`;
const f = (d, c) => `<path d="${d}" fill="${c}"/>`;
const dot = (x, y, c = RED, r = 1.7) => `<circle cx="${x}" cy="${y}" r="${r}" fill="${c}"/>`;
const box = (x, y, w, h, c, s = 'none') => `<rect x="${x}" y="${y}" width="${w}" height="${h}" fill="${c}" stroke="${s}"/>`;
const star = f('M5 0l1 2.700 2.700-1.600-1 2.700L11 5 8 6l1.600 3-3-1.400L5.500 11 4.400 8 1.500 9.500l1.200-3L0 5.200l2.900-1L1.500 1.500 4.200 2.600z', '#f7e01c');
const win = box(10.5, .5, 7, 6, '#fff', '#777') + box(10, 0, 8, 2.500, '#2b3fa8');
const gwin = box(10.5, .5, 7, 6, '#fff', '#888') + box(10, 0, 8, 2, '#888');
const eye = (c = '#666') => `<ellipse cx="13" cy="3.500" rx="4.500" ry="2.800" fill="#fff" stroke="${c}"/><circle cx="13" cy="3.500" r="1.800" fill="${c}"/>`;
const txt = (x, y, s, size, c = INK, w = 700, fam = 'Liberation Sans') => `<text x="${x}" y="${y}" font-size="${size}" fill="${c}" font-weight="${w}" font-family="${fam}">${s}</text>`;
const page = c => box(3.5, 1.5, 12, 15, '#fff', c) + p('M6 5h7M6 8h7M6 11h7M6 14h7', c, 1);
const ramp = c => f('M1 17l16-6v4z', c);
const wave = c => p('M1 13h3c1-5 4-5 5 0s4 5 5 0h3', c, 1.3);
const load = (c, b = INK) => p('M2 16.500h14', b, 2) + p('M3 4h12M4 4v9M9 4v9M14 4v9M2.500 11l1.500 2 1.500-2M7.500 11l1.500 2 1.500-2M12.500 11l1.500 2 1.500-2', c, 1.2);
const grid = c => p('M2 2v15M6 2v15M10 2v15M14 2v15M1 5h16M1 9h16M1 13h16', c, 1.4).replace('/>', ' stroke-dasharray="1.400 1.400"/>');
const frame = c => p('M3 1v16M14 1v16M0 5h18M0 14h18', c, 1.4).replace('/>', ' stroke-dasharray="2 1.500"/>');
const cubeIcon = (c = '#9cc4ee', d = '#4f7fb8') => f('M2 6l4-3h10l-3 3z', c) + f('M2 6h11v10H2z', c) + f('M13 6l3-3v10l-3 3z', d) + p('M2 6h11v10H2zM2 6l4-3h10l-3 3M16 3v10l-3 3', d, .8);
const table = c => box(1.5, 3.500, 15, 12, '#dedede', c) + p('M1 7h16M1 10h16M1 13h16M6 3v13M11 3v13', c, 1);
const term = t => box(1, 2, 16, 14, '#f4f4f4', '#444') + box(1, 2, 16, 3, '#2b3fa8') + txt(2, 13, t, 8);
const hex = g => f('M6 1h10l5.500 10-5.500 10H6L.5 11z', '#1a1a1a') + p('M6.500 2h9l4.500 9', '#666', 1) + g;
const bx = (g, c = '#b5b5b5') => `<rect x="1" y="1" width="20" height="20" rx="2" fill="${c}" stroke="#333"/>` + g;
const cyl = (c, d) => f('M1 12L9 3q9-3 12 6l-9 10q-9 3-11-7z', c) + `<ellipse cx="15" cy="7.500" rx="6.500" ry="4.500" transform="rotate(42 15 7.500)" fill="${c}" stroke="${d}"/><ellipse cx="15" cy="7.500" rx="3.500" ry="2" transform="rotate(42 15 7.500)" fill="${d}"/>` + p('M10 3L1 12q1 8 11 8l9-10', d, 1) + p('M5 12l6-6', 'rgba(255,255,255,.6)', 2);
const blockWin = cubeIcon('#6f93b8', '#34506e');
const hatch = p('M4 12l9-7M6 14l9-7', '#666', 1.2);

const icons = {
  min: p('M5 10h10', '#555', 1), max: box(5.5, 5.5, 8, 8, 'none', '#222'), close: p('M5 5l8 8M13 5L5 13', '#222', 1.1),
  dmin: p('M4 14h9', '#222', 2), restore: p('M6 7V3h9v7h-4', '#333', 1.6) + box(3, 7.5, 8, 7, 'none', '#333') + p('M3 8h8', '#333', 2), dclose: p('M4 4l10 10M14 4L4 14', '#222', 2.2),
  new: page(GRAY) + star + f('M7 10l4-4 6 3-4 5z', BLUE), open: f('M1 6h6l1 2h8l-2 9H1z', '#f0e08a') + p('M1 6h6l1 2h8v9H1z', '#b5a040', 1) + f('M12 8V4h-2l4-4 4 4h-3v4z', '#1b8a2f'),
  center: f('M3 1h7q7 1 7 8t-7 8H3z', '#16a6dd') + p('M11 6q-5-1-5 3t5 3', '#fff', 2.200), cubes: f('M1 1h6q5 1 5 6t-4 6H1z', '#16a6dd') + f('M12 6l5 3v6l-5 3-5-3V9z', '#35b8e8') + p('M7 9l5 3 5-3M12 12v6', '#fff', 1),
  props: page('#555') + f('M3 4q4-5 8-3l5 1v3l-8 3z', '#d9a988') + box(1, 1, 4, 4, '#3f7ec1'), save: f('M1 1h14l2 2v14H1z', '#555') + box(4, 1, 9, 6, '#ddd') + box(4, 10, 10, 7, '#eee') + p('M5 12h8M5 14h8', '#555', 1),
  print: box(4, 1, 10, 5, '#666') + box(0, 6, 18, 8, '#555') + box(4, 11, 10, 6, '#fff', '#555') + p('M6 14h6', '#555', 1), newdoc: page('#666') + star, doc: page('#666'),
  undo: p('M3 10q7-8 13 2', '#666', 2) + f('M0 5l1 8 7-4z', '#666'), redo: p('M15 10Q8 2 2 12', '#aaa', 2) + f('M18 5l-1 8-7-4z', '#aaa'),
  panel: box(3.500, 1.500, 11, 15, '#fff', '#555') + box(3, 1, 12, 3, '#2b3fa8') + p('M6 6v10M8 7h5M8 10h5M8 13h5', '#555'), gridp: box(1.5, 1.5, 15, 15, '#eee', '#555') + box(1, 1, 16, 3, '#2b3fa8') + p('M1 8h16M1 11h16M1 14h16M5 4v13M9 4v13M13 4v13', '#777', 1),
  report: box(5.5, 1.5, 9, 15, '#eee', '#aaa') + p('M7 4h6M7 7h6M7 10h6M7 13h6', '#aaa'), console: term('&gt;&gt;_'), script: term('') + box(0, 8, 18, 9, '#bbb') + txt(0, 16, '&gt;sc', 9), list: box(4.500, 1.500, 9, 15, '#fff', '#555') + box(4, 1, 10, 3, '#2b3fa8') + p('M6 7h6M6 10h6M6 13h6', '#446', 1.8),
  select: f('M5 3h12l-4 12H1z', '#f6e35c') + p('M5 3h12l-4 12H1z', '#8a6d00') + dot(5, 3) + dot(16, 3) + dot(1, 15) + f('M9 7l8 6-4 1 1 4-2 0-1-4-2 2z', '#222'), calc: box(1.5, 3.5, 15, 12, '#f6e35c', '#555') + txt(3, 12, '±', 9) + f('M9 6l7 5-3 1 1 4-2 0-1-4-2 2z', '#222'),
  loadnew: star + win + p('M6 5v9M3 11l3 3 3-3', BLUE, 2) + p('M0 17h16', INK, 2), loadgray: gwin + p('M6 3v11M3 11l3 3 3-3', '#aaa', 2) + p('M0 17h16', '#aaa', 2),
  filterx: f('M0 3h15l-5 6v8l-4-2V9z', '#6b97c9') + p('M9 1l8 8M17 1L9 9', '#e01010', 2.800),
  eyeA: eye() + p('M4 6q-3 5 0 11M7 8v8M4 10h6', '#666'), xxA: txt(0, 5, 'x.xx', 7, '#444') + p('M6 17q-2-5 1-9M10 8v8M6 12h6', '#666'), eyeB: eye() + p('M6 5v9M3 11l3 3 3-3', '#888') + p('M0 17h16', '#888', 2), xxB: txt(0, 5, 'x.xx', 7, '#444') + p('M6 7v7M3 11l3 3 3-3', '#888') + p('M0 17h16', '#888', 2),
  boxeye: cubeIcon('#b5b5b5', '#8a8a8a') + eye(), gridblue: box(1.5, 4.5, 12, 13, '#6fa0dc', '#23497e') + p('M5 5v12M9 5v12M1 9h13M1 13h13', '#fff', 1) + eye('#1b2f6b'), eyeC: eye() + ramp('#777') + f('M0 9l9 3-9 2z', '#777'), xxC: txt(0, 5, 'x.xx', 7, '#444') + f('M0 9l9 3-9 2zM17 9l-9 4 9 2z', '#777'),
  winramp: gwin + f('M0 9l12 3-12 2z', '#777') + dot(13, 13, '#aaa', 3), rail: p('M1 3v13M6 3v13M11 3v13M16 3v13M1 8h16M1 12h16', '#666', 1.200), zoomx: `<circle cx="8" cy="9" r="6" fill="none" stroke="#444" stroke-width="2"/>` + p('M12 13l5 5', '#444', 2.500) + p('M9 1l8 8M17 1L9 9', '#e01010', 2.800),
  node: star + dot(10, 11, RED, 2), line: star + p('M4 16L16 3') + dot(4, 16) + dot(16, 3), member: star + p('M3 16L15 3', '#8fb4e0', 3) + dot(3, 16) + dot(15, 3) + txt(11, 18, 'I', 9, BLUE, 700, 'Liberation Serif'), frame: star + p('M6 14V3h10v9l-4 4') + dot(6, 14) + dot(6, 3) + dot(16, 3) + dot(12, 16),
  support: star + f('M9 8l5 9H4z', '#1c8a3a') + dot(9, 8), hinge: star + p('M3 8h13') + f('M4 9l3 7H1zM14 9l3 7h-6z', '#1c8a3a') + dot(3, 8) + dot(16, 8), surfsup: star + f('M3 8h14l-3 4H0z', '#7da7d9') + p('M3 17l2-4 2 4M9 17l2-4 2 4', '#1c8a3a'),
  surface: star + f('M4 8h13v8H4z', '#8fb9e6') + p('M4 8h13v8H4z', '#5d82ab', 1) + dot(17, 16), shell: star + f('M4 8q6-7 13 2l-6 6q-3-4-6-2z', '#7ea9da') + dot(5, 15) + dot(11, 16) + dot(16, 10), opening: star + p('M4 4h12v12H4z', '#6d9fd6', 2.500) + dot(4, 4) + dot(16, 4) + dot(4, 16) + dot(16, 16), solid: star + f('M3 9l6-3v8l-6 3zM9 6l7-3v8l-7 3z', '#7ea9da') + p('M3 17l14-14', '#39628f', 1) + dot(3, 17) + dot(17, 3), block: cubeIcon() + star + win,
  gmember: p('M5 4l5-3M8 4v12', '#bbb', 3), loadA: star + p('M12 4v12M9 13l3 3 3-3', BLUE, 2), loadB: star + load(BLUE, RED), loadC: load('#aaa', '#aaa'), loadD: star + load(BLUE) + dot(2, 16) + dot(16, 16), loadE: p('M3 2q5 8 1 15M8 3q4 7 1 12M2 6h7M3 11h7', '#777') + txt(12, 17, 'I', 9, '#777'), loadF: star + p('M4 11h10l3 5H7z', '#2e9ad8').replace('/>', ' stroke-dasharray="2 1"/>') + p('M9 4v8', BLUE, 2),
  filterw: f('M1 5h13l-5 5v7l-3-2v-5z', '#6b97c9') + win, chart: p('M2 2v15h15', INK, 1.200) + p('M3 14l4-5 4 3 5-6', BLUE) + win, arch: p('M1 6l3-3h10l3 3M3 16V6M7 16V6h5v10M15 16V6', '#777'), film: box(1.5, 2.5, 15, 13, '#ddd', '#777') + p('M1 5h16M1 13h16', '#777', 2).replace('/>', ' stroke-dasharray="1.500 1.500"/>') + f('M7 6l5 3-5 3z', '#777'),
  curve: p('M1 5l3 10L9 6l5 9 3-10M1 5h16', '#888', 1.300), slab: f('M1 10l9-5 7 3-7 6z', '#aaa') + p('M1 12l9 4 7-6', '#888'), dice: cubeIcon('#bbb', '#666') + dot(5, 9, '#555') + dot(10, 13, '#555') + dot(10, 9, '#555') + dot(5, 13, '#555'), persons: dot(6, 3, '#888', 2) + f('M2 11l4-7 4 7zM11 4l4-3v2h3v2h-3v2zM4 14l2-2 2 2v3H5v-3z', '#888'), ramp: f('M1 16L17 3l-4 8z', '#aaa'),
  waveA: p('M2 3h14', '#444', 2) + wave('#888'), waveB: box(1.5, 1.5, 15, 3, '#ddd', '#999') + wave('#888'), waveC: p('M1 3h16', '#999', 3).replace('/>', ' stroke-dasharray="4 1"/>') + wave('#888'), waveD: p('M2 2h14M5 2v5M13 2v5M3 7h4M11 7h4', '#555') + wave('#888'), waveE: f('M1 11L16 1l-4 8z', '#aaa') + wave('#888'), rampnew: star + win + f('M1 17l16-9-5 8z', '#3f63d8'), pin: p('M9 1v10', '#f08030', 1.500) + dot(9, 13, '#e820d8', 3),
  check: box(1, 2, 15, 15, '#c9c9c9') + p('M3 8l5 7L17 3', '#888', 2.500), dotgrid: grid('#555') + win,
  folder: f('M1 3h5l1 1h9v12H1z', '#f3e9a6') + p('M1 3h5l1 1h9v11.500H1z', '#c9b45c', 1), folderopen: f('M3 2h5l1 1h7v10H3z', '#e8da85') + f('M0 5h14l2 11H2z', '#f3e9a6') + p('M0 5h14l2 10.500H2z', '#c9b45c', 1),
  stab: p('M2 15L14 2', '#8fb4e0', 2.500) + dot(2, 15) + dot(8, 9) + dot(15, 2) + p('M11 13h6M14 10v6'), flaeche: f('M1 9l6-6 8 3-5 6z', '#5f8fc2') + p('M11 13h6M14 10v6'), volumen: cubeIcon() + p('M12 14h6M15 11v6'),
  lager: p('M1 4h16', INK, 1.500) + dot(2, 4) + dot(16, 4) + f('M5 5l3 9H2zM13 5l3 9h-6z', '#1c8a3a'), netz: p('M2 2l14 14', '#334') + dot(2, 2) + dot(16, 16), gelenk: f('M1 8l8-3 8 3-8 4z', '#cfe3f5') + p('M3 11l12-6', '#2a66ad', 2), weld: f('M2 2h4v9l10 3-3 3-11-3z', '#8794a5') + f('M6 10l4-5 6 3-4 6z', '#f08a1c'), lastfall: p('M8 2v10M5 9l3 3 3-3', BLUE, 1.500) + p('M1 16h16'), bemess: box(1, 2, 8, 6, '#6b8fe8') + p('M9 5q5 0 5 6', INK) + box(10, 11, 6, 6, '#ee18e0'),
  tabdata: f('M2 7h5l1 2h9v6H2z', '#f0cf5a') + box(7.5, 2.500, 9, 6, '#fff', '#2b62c8') + f('M9 11l4-3 4 3-4 3z', '#3f7ec1') + p('M13 13v4', RED), tabeye: `<path d="M1 9q8-9 16 0-8 8-16 0z" fill="#fff" stroke="#222a50" stroke-width="1.500"/><circle cx="9" cy="9" r="3.500" fill="#2a3180"/>`, tabcam: box(1, 4, 11, 10, '#555') + f('M12 8l5-4v10l-5-4z', '#555'),
  struct: box(1.5, 1.5, 14, 15, '#e7f5e7', '#555') + box(1, 1, 15, 3, '#2b3fa8') + f('M3 15L14 5v10z', '#3daa52'), basis: p('M2 15L13 2', '#8fb4e0', 2.500) + dot(2, 15) + dot(13, 2) + txt(11, 17, 'I', 9, '#555'),
  arrL: box(1.5, 1.5, 9, 6, '#fff', '#555') + p('M6 10q8-4 7 7', '#3372b8', 2.500) + f('M3 10l6-4v7z', '#3372b8'), arrR: box(7.5, 1.5, 9, 6, '#fff', '#555') + p('M10 6Q3 7 5 14', '#3372b8', 2.500) + f('M1 12h8l-3 6z', '#3372b8'),
  tbl: table('#888'), tbl2: p('M3 1l11 3', '#999') + box(1.5, 6.500, 15, 9, '#e5e5e5', '#888') + p('M1 10h16M6 6v9M11 6v9', '#888', 1), tblp: table('#999') + p('M9 5v9M4.500 9.500h9', '#777', 2.500), tblx: table('#999') + p('M5 6l8 8M13 6l-8 8', '#888', 2.500), tbls: table('#999') + dot(9, 6, '#888', 2) + dot(9, 13, '#888', 2), zero: box(1, 0, 16, 6, '#8acb7e') + txt(0, 16, '0.00', 9) + p('M8 18h10', '#2b62c8', 1),
  scr: box(1, 0, 16, 17, '#cfcfcf') + txt(1, 7, '&gt;', 8) + txt(1, 16, '&gt;sc', 8), scrd: box(1, 0, 16, 17, '#cfcfcf') + txt(1, 7, '&gt;', 8) + txt(10, 8, 'D', 9, '#3a3ae0') + txt(1, 16, '&gt;sc', 8),
  ucs: box(7.5, 1.5, 9, 6, '#fff', '#777') + p('M7 3v9l8 3', RED, 1.500) + p('M7 12l-6 4', '#1c8a3a', 2) + dot(15, 15),
  wa: blockWin + star + win, wb: blockWin + p('M9 3v4M5 2h12', INK), wc: blockWin + p('M16 1v14', BLUE), wd: blockWin + p('M1 5V1h4M13 1h4v4M1 13v4h4M13 17h4v-4', BLUE), we: blockWin + win + p('M1 13v4h4M13 17h4v-4', BLUE),
  mdA: star + win + f('M2 10l7-3 7 3-7 3zM2 14l7-3 7 3-7 3z', '#a68f5b') + p('M2 12l7 3 7-3', INK, 1), dim: star + txt(7, 12, 'x', 9) + p('M1 16h16M1 12v5M17 12v5'), dimx: star + txt(6, 12, 'xx', 8) + p('M16 13H6l-4 4'), man: star + win + dot(8, 6, '#555', 2) + p('M8 7v5M4 9h8M8 12l-3 5M8 12l3 5', '#555', 2), home: box(2.500, 3.500, 14, 13, '#fff', '#666') + star + win,
  bend: p('M3 13L14 3') + dot(3, 13) + dot(8, 9, INK) + dot(14, 3) + dot(16, 8) + dot(6, 17), num: txt(0, 7, '2', 8) + box(1, 10, 5, 7, '#2a7ab5') + p('M8 4q6 0 6 5', BLUE, 2) + txt(11, 18, '6', 8), bars: p('M2 2v14M16 2v14', '#777', 1) + p('M9 2v14', RED) + dot(9, 2) + dot(9, 16),
  gdots: grid('#557') + eye('#1b2f6b'), gdots2: grid('#557') + eye('#1b2f6b'), gnew: grid('#666') + star + win, gframe: frame('#777') + star, gframe2: frame('#557') + eye('#1b2f6b'), corner: p('M3 2v14h13M3 11h5v5', '#777', 1),
  magA: grid('#667') + p('M10 9V5q0-3 3-3t3 3v4', '#888', 2) + box(9, 8, 3, 3, RED) + box(15, 8, 3, 3, '#1d5fd0'), magB: p('M4 14V8q0-5 5-5t5 5v6', '#556', 3) + box(2, 12, 4, 4, RED) + box(12, 12, 4, 4, '#1d5fd0'), sqr: box(4.500, 4.500, 9, 9, 'none', '#333'), sqx: `<circle cx="9" cy="9" r="6" fill="none" stroke="#444"/>` + p('M4 4h10v10H4zM4 4l10 10M14 4L4 14', '#444', 1), sqx2: box(4.5, 4.5, 9, 9, 'none', '#444') + p('M3 3l12 12M15 3L3 15', '#444', 1),
  perp: p('M4 3v11h11M4 8h6v6', '#444'), seg: p('M5 14L13 4', '#555', 1) + dot(9, 9, '#555', 1), par: p('M4 12l7-8M8 14l7-8', '#666', 1), tan: p('M3 4h12', '#444') + `<circle cx="9" cy="9.500" r="4.500" fill="none" stroke="#444"/>`, circ: `<circle cx="9" cy="9" r="5" fill="none" stroke="#555" stroke-width="1.500"/><circle cx="9" cy="9" r="2.500" fill="none" stroke="#777"/>`,
  hA: hatch + p('M5 7l3 4M9 4l4 5', '#444', 1), hB: hatch + dot(9, 9, '#333'), hC: hatch + p('M5 6l5 6', '#555', 1), hD: p('M4 12l9-7M6 14l9-7', '#aaa').replace('/>', ' stroke-dasharray="1.500 1.500"/>'), gridA: grid('#668'), gridB: frame('#668'), stack: f('M3 10l4-3h9l-3 3z', '#888') + p('M3 15l4-3M3 15h10l3-3V5H7L3 8v7M3 8h10l3-3M13 8v7M3 11.500h10l3-3', '#444', 1), redbar: p('M2 5v8M16 5v8', RED) + p('M3 9h12', '#444', 3), weight: p('M9 2v7M7 7l2 2 2-2', '#444', 1.200) + box(6.500, 10.500, 5, 5, '#fff', '#444')
};
const big = {
  hX: hex(p('M8 8l6 6M14 8l-6 6', '#fff', 2.500)), hArrow: hex(p('M7 15l7-7', '#fff', 2) + f('M10 6h6v6z', '#fff')), hCircle: hex('<ellipse cx="11" cy="11" rx="5.500" ry="4.500" fill="none" stroke="#fff" stroke-width="1.800"/>'), hArc: hex(p('M6 7q7 0 9 9M6 5v5', '#fff')), hSpiral: hex(p('M5 15Q6 6 16 5q1 7-6 9-4 0-2-4 2-3 5-2', '#ddd', 1.300)), hLine: hex(p('M8 14l6-6', '#fff', 2) + dot(7, 15, '#fff', 2) + dot(15, 7, '#fff', 2)), hPlane: hex(f('M6 9l9-4 2 6-9 5z', '#eee') + p('M7 13l9-5M10 7l3 7', '#222', 1)), hMesh: hex(p('M11 5l5 6-5 6-5-6zM4 9l4-4M14 17l4-4', '#ddd', 1.300)),
  hBox: hex(f('M7 8l5-3 4 2v7l-4 3-5-2z', '#ccc') + p('M7 8l5 2v7M12 10l4-3', '#444', 1)), hBrep: hex(f('M6 12q0-7 6-7l4 4-3 7q-6 2-7-4z', '#ccc') + p('M11 5v4h5', '#333', 1)), hField: hex(p('M11 4v14M5 7l12 8M17 7L5 15M7 11h8', '#ccc', 1)), hTwist: hex(f('M9 5h7v12l-8-3q3-4 1-9z', '#ccc') + p('M9 9h7M8 13h8M13 5v11', '#444', 1)),
  hBool: hex('<circle cx="11" cy="11" r="5.500" fill="#fff"/><circle cx="9.500" cy="9.500" r="3.500" fill="#1a1a1a"/>'), hInt: hex(txt(4, 16, '0.1', 11, '#fff', 700, 'Liberation Serif')), hNum: hex(txt(7, 17, '7', 16, '#fff', 700, 'Liberation Serif')), hText: hex(txt(5, 17, 'A', 16, '#fff', 700, 'Liberation Serif')),
  bButton: bx(p('M11 3v8M4 15h14M6 15v3M9 15v3M12 15v3M15 15v3', '#111', 1.500) + f('M7 9h8l-4 5z', '#111'), '#999'), bPanel: bx(p('M4 16l4-7 0 8 5-10-1 10 6-9-1 8', '#a06a00', 1.800), '#fbc21d'), bSlider: bx(box(7, 4, 8, 14, '#222') + box(9, 6, 4, 6, '#eee')), bKnob: '<circle cx="11" cy="11" r="10" fill="#777" stroke="#333"/><path d="M6 11a5 5 0 1 1 5 5l8-5" fill="#222"/>' + '<circle cx="11" cy="11" r="5" fill="#333"/>', bSketch: bx(p('M12 3l-3 5h5M13 9H8v4q5-1 5 2t-4 3', '#555', 2), '#aaa'), bList: bx(box(5, 5, 12, 3, '#eee', '#444') + box(5, 10, 12, 3, '#eee', '#444') + box(5, 15, 12, 3, '#eee', '#444')),
  bGrad: bx(p('M2 14h6M14 14h6', '#222') + '<circle cx="15" cy="14" r="2" fill="#fff" stroke="#222"/>' + box(2, 2, 18, 5, '#f7a'), '#e8189a'), bImg: bx(box(2, 2, 6, 6, '#4bd93a') + box(8, 2, 6, 6, '#1e9a2a') + box(14, 8, 6, 6, '#b8f24a') + box(2, 8, 6, 6, '#0c3a10') + box(14, 14, 6, 6, '#24d0b0') + box(8, 14, 6, 6, '#7ce83a') + box(2, 14, 6, 6, '#d7f04a'), '#6fdc3a'),
  uCherry: p('M6 15Q7 7 12 3q3 5 3 12', '#5b3a10', 1.300) + f('M4 3q7-3 9 2-6 3-9-2z', '#3c9a22') + dot(6, 16, '#d3121a', 4) + dot(16, 17, '#d3121a', 4), uTree: bx(p('M11 18v-8M11 12L6 7M11 11l5-5M11 9V4M7 9L4 8', '#111', 1.800) + p('M5 18h12M5 5h2M14 4h3M9 3h3', '#111', 1.500), '#888'), uArrow: f('M2 8h9V4l9 7-9 7v-4H2z', '#3c3c3c'), uArrowL: p('M2 8h9V4l8 7-8 7v-4H2z', '#777', 1.500, '#fff'), uPill: '<ellipse cx="8" cy="8" rx="6" ry="5" fill="#ddd" stroke="#666"/><ellipse cx="14" cy="14" rx="6" ry="5" fill="#d8407a" stroke="#7a1040"/><circle cx="14" cy="13" r="2" fill="#fff"/>', uFlask: p('M9 3v7l-5 9h14l-5-9V3M7 3h8', '#777', 1.300, '#fff') + f('M6 15l2-3h6l3 6H5z', '#d8407a'),
  tA: f('M6 1h10l5.500 10-5.500 10H6L.5 11z', '#2f4fc4') + f('M4 8l5 3-5 3z', '#fff'), tB: f('M6 1h10l5.500 10-5.500 10H6L.5 11z', '#2f4fc4') + f('M13 8l5 3-5 3z', '#fff'),
  gOpen: p('M4 12V2h7l3 3v6', '#888', 1, '#eee') + f('M0 9h7l2 3h11l-2 9H0z', '#6cc43c') + p('M0 9h7l2 3h11l-1 9H0', '#2f7a18', 1), gSave: f('M1 1h18l2 2v18H1z', '#1f62d8') + box(5, 1, 12, 8, '#e8eef8') + box(6, 13, 10, 8, '#555') + box(8, 14, 3, 7, '#ccc'), gFit: p('M2 8V2h6M14 2h6v6M20 14v6h-6M8 20H2v-6', '#222', 3.500) + p('M9 9l4 4M13 9l-4 4', '#222', 2), gEye: '<path d="M1 11q10-13 20 0-10 11-20 0z" fill="#fff" stroke="#222" stroke-width="1.500"/><circle cx="11" cy="11" r="5.500" fill="#5fb8e0" stroke="#14507a"/><circle cx="11" cy="11" r="2.500" fill="#111"/>', gPencil: f('M7 14L14 3l6-2v8l-8 9z', '#d8261c') + f('M7 14l5 4-7 3z', '#eeb04a') + p('M1 12q5-3 4 2t-4 5q2 4 14 0', '#5a1c10', 1.300),
  cylDark: '<path d="M4 15V8l4-5 6-1 5 5-2 9z" fill="#e2e2e2" stroke="#999"/><ellipse cx="12" cy="6" rx="4" ry="2.500" fill="#bbb"/><ellipse cx="11" cy="16" rx="9" ry="5" fill="#333"/>', cylWire: cyl('#f4f4f4', '#666'), cylRed: cyl('#c8140c', '#5d0602'), cylTeal: cyl('#0fa0a0', '#065252'), cylGreen: cyl('#62b020', '#2d5a08') + f('M1 12l11 8q-10 1-11-8z', '#ddd'), ballO: '<circle cx="11" cy="11" r="9.500" fill="#ddd" stroke="#666"/><path d="M11 1.500a9.500 9.500 0 0 0 0 19z" fill="#ef8a1c"/>', ballB: f('M7 2h8l6 6v7l-6 6H7l-6-6V8z', '#2c5aa8') + '<circle cx="11" cy="11" r="8" fill="#7cc0f2"/>',
  nPlus: txt(0, 14, 'N', 9) + box(9, 1, 6, 20, '#6fd23a', '#2a7a10') + p('M10 11h7', '#c01818', 3) + f('M16 7l5 4-5 4z', '#c01818'), nDel: box(3, 1, 7, 20, '#eee', '#444') + txt(4, 10, '1', 8) + txt(4, 19, '2', 8) + p('M10 10l10 10M20 10L10 20', '#d01818', 3), nL: box(8, 1, 6, 18, '#6fd23a', '#2a7a10') + p('M1 16h10', '#c01818', 3) + f('M6 12v8l-6-4z', '#c01818') + txt(15, 20, 'L', 9)
};
const draw = n => big[n] ? `<svg viewBox="0 0 22 22">${big[n]}</svg>` : `<svg viewBox="0 0 18 18">${icons[n] || ''}</svg>`;

document.querySelectorAll('[data-icon]').forEach(e => { e.innerHTML = draw(e.dataset.icon); });

const token = t => {
  if (t === '|') return '<span class="bar-sep"></span>';
  if (t === ':') return '<span class="bar-sep dots"></span>';
  if (t === '_') return '<span class="space"></span>';
  if (t === 'v') return '<span class="caret"></span>';
  if (t === '=combo') return '<span class="combo"></span>';
  if (t === 'more') return '<button class="more">»</button>';
  if (t === 'prev') return '<button class="stepbtn">◀</button>';
  if (t === 'next') return '<button class="stepbtn">▶</button>';
  const on = t[0] === '*', name = on ? t.slice(1) : t;
  return `<button${on ? ' class="on"' : ''} aria-label="${name}">${draw(name)}</button>`;
};
document.querySelectorAll('[data-tools]').forEach(e => { e.innerHTML = e.dataset.tools.split(' ').map(token).join(''); });
document.querySelectorAll('[data-ribbon]').forEach(e => {
  e.innerHTML = e.dataset.ribbon.split(' ').map(t => t === '|' ? '<span class="vsep"></span>' : `<button aria-label="${t}">${draw(t)}</button>`).join('');
});

// Work-plane snap points of the 3D view
let dots = '';
for (let i = -14; i <= 14; i++) for (let j = -9; j <= 9; j++) {
  const x = 555.3 + 49.3 * i + 70.5 * j, y = 288.7 + 33.2 * i - 23.2 * j;
  if (x > 216 && x < 1030 && y > 99 && y < 437) dots += `<rect x="${x - .7}" y="${y - .7}" width="1.400" height="1.400" fill="#c8c8c8"/>`;
}
document.getElementById('dots').innerHTML = dots;

// Navigation cube, each face split by lines near its edges
const face = (o, u, v, fill) => {
  const at = (a, b) => [o[0] + (u[0] - o[0]) * a + (v[0] - o[0]) * b, o[1] + (u[1] - o[1]) * a + (v[1] - o[1]) * b].join(' ');
  let s = `<path d="M${at(0, 0)}L${at(1, 0)}L${at(1, 1)}L${at(0, 1)}z" fill="${fill}" stroke="#3c3c3e"/>`;
  for (const k of [.25, .75]) s += p(`M${at(k, 0)}L${at(k, 1)}M${at(0, k)}L${at(1, k)}`, '#3c3c3e', 1);
  return s;
};
document.getElementById('cube').innerHTML = face([921, 130], [958, 154], [921, 186], '#77777a') + face([958, 154], [1009, 137], [958, 209], '#8f8f93') + face([921, 130], [973, 113], [958, 154], '#7d7d80');

// Grasshopper wires, grid and grips
const wire = d => p(d, '#151515', 3.500);
const twin = d => p(d, '#151515', 6) + p(d, '#333', 1.400);
let g = '';
for (let x = 1144.700; x < 2050; x += 165.600) g += p(`M${Math.round(x) + .5} 186V1132`, '#414141', 1);
for (let y = 363.300; y < 1140; y += 55.250) g += p(`M1027 ${Math.round(y) + .5}H2048`, '#414141', 1);
g += twin('M1056 406C1016 408 1048 474 1020 474') + twin('M1046 473H1020');
g += twin('M1098 658.500C1350 658.500 1450 723.500 1720 723.500') + twin('M1062 940C1350 940 1450 723.500 1720 723.500');
g += wire('M1214 328.500H1263') + wire('M1220 564.500H1262') + wire('M1127 478.500C1217 478.500 1174 350.500 1263 350.500') + wire('M1127 511.500C1187 511.500 1203 586.500 1262 586.500');
g += wire('M1435 383.500C1650 383.500 1500 723.500 1720 723.500') + wire('M1434 620C1550 620 1600 723.500 1720 723.500');
g += wire('M1688 673H1721') + wire('M1691 809H1721') + wire('M1691 897H1721') + wire('M1679 964H1721');
const grip = (x, ...ys) => ys.forEach(y => { g += `<circle cx="${x}" cy="${y}" r="4" fill="#fff" stroke="#000" stroke-width="2"/>`; });
grip(1157, 328.5); grip(1215, 328.5); grip(1162, 564.5); grip(1221, 564.5); grip(1610, 964); grip(1680, 964);
grip(1055, 406); grip(1130, 406); grip(1045, 473, 495, 517); grip(1128, 478.5, 511.5);
grip(1262, 328.5, 350.5, 372.5, 394.5, 416.5, 438.5, 460); grip(1436, 383.5);
grip(1261, 564.5, 586.5, 608.5, 630.5, 652.5, 674.5, 696); grip(1435, 620);
grip(1099, 658.5); grip(1063, 940); grip(1689, 673); grip(1692, 809, 897); grip(2023, 664, 698.5, 733);
grip(1720, 673, 723.5, 787, 809, 831, 853, 875, 897, 919, 941, 963, 985, 1007);
document.getElementById('wires').innerHTML = g;
```
